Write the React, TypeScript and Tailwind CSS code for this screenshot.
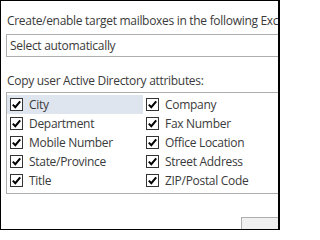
import React from "react";

const left = ["City", "Department", "Mobile Number", "State/Province", "Title"];
const right = ["Company", "Fax Number", "Office Location", "Street Address", "ZIP/Postal Code"];

function Check() {
  return (
    <span className="flex h-[13px] w-[13px] shrink-0 items-center justify-center border border-[#333333] bg-white">
      <svg width="11" height="11" viewBox="0 0 11 11">
        <path d="M1.8 5.6 L4.3 8.2 L9.2 2.4" fill="none" stroke="#000" strokeWidth="2" />
      </svg>
    </span>
  );
}

function Item({ label, active }: { label: string; active?: boolean }) {
  return (
    <div className={`flex h-[19px] items-center gap-[6px] pl-[3px] ${active ? "bg-[#dfe5ee]" : ""}`}>
      <Check />
      <span className="whitespace-nowrap">{label}</span>
    </div>
  );
}

export default function App() {
  return (
    <div
      className="relative h-[230px] w-[280px] overflow-hidden border-y border-l border-r-2 border-black bg-white text-[12px] tracking-[-0.3px] text-[#3a3a3a]"
      style={{ fontFamily: '"Open Sans", "Noto Sans", sans-serif' }}
    >
      <div className="flex flex-col pl-[5px] pt-[12px]">
        <div className="whitespace-nowrap pl-[1px] leading-[16px]">
          Create/enable target mailboxes in the following Exchange organization:
        </div>
        <div className="mt-[5px] flex h-[23px] w-[300px] items-center border border-[#adadad] pl-[3px]">
          Select automatically
        </div>
        <div className="mt-[16px] whitespace-nowrap pl-[1px] leading-[16px]">
          Copy user Active Directory attributes:
        </div>
        <div className="mt-[3px] w-[300px] border border-[#adadad] pb-[3px] pt-[2px]">
          <div className="grid w-[272px] grid-cols-[136px_136px]">
            {left.map((l, i) => (
              <React.Fragment key={l}>
                <Item label={l} active={i === 0} />
                <Item label={right[i]} />
              </React.Fragment>
            ))}
          </div>
        </div>
      </div>
      <div className="absolute left-[240px] top-[216px] h-[30px] w-[60px] border border-[#adadad] bg-[#f0f0f0]" />
    </div>
  );
}
